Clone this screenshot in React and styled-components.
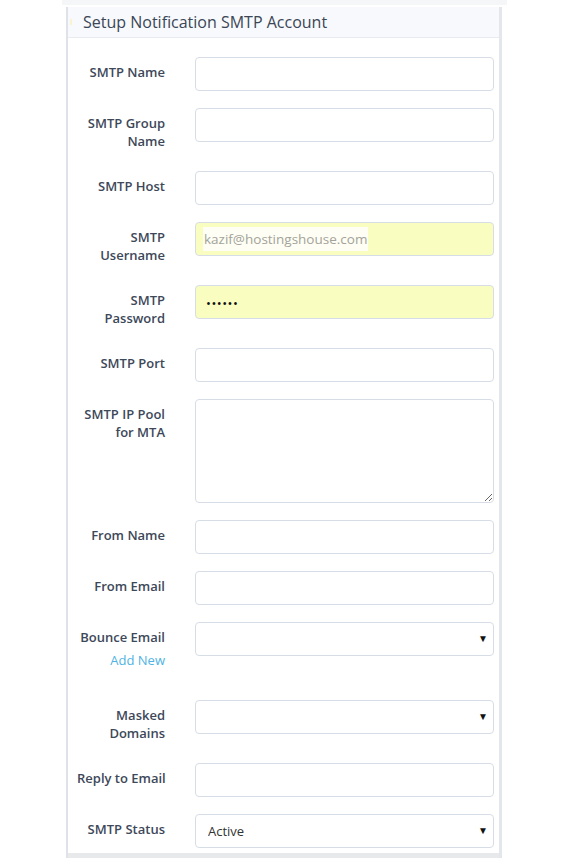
import React from 'react'
import styled, { createGlobalStyle } from 'styled-components'

const GlobalStyle = createGlobalStyle`
  body {
    margin: 0;
    background: #fff;
    font-family: 'Open Sans', 'Noto Sans', sans-serif;
  }
`

const Page = styled.div`
  width: 583px;
  height: 858px;
  overflow: hidden;
`

const TopStrip = styled.div`
  height: 5px;
  margin: 0 76px 2px 62px;
  background: #f5f6f8;
`

const Panel = styled.div`
  margin: 0 81px 0 66px;
  border-left: 2px solid #dfe3e9;
  border-right: 3px solid #e3e6eb;
`

const Header = styled.div`
  position: relative;
  height: 30px;
  line-height: 30px;
  padding-left: 15px;
  background: #f7f9fc;
  border-bottom: 1px solid #e8ecf1;
  font-size: 16px;
  color: #3b4656;
`

const Marker = styled.span`
  position: absolute;
  left: 2px;
  top: 12px;
  width: 2px;
  height: 6px;
  background: #faf3d2;
`

const Body = styled.div`
  padding: 19px 5px 5px 9px;
`

const Row = styled.div`
  display: grid;
  grid-template-columns: 88px 299px;
  column-gap: 30px;
  align-items: start;
  margin-bottom: ${p => (p.last ? '0' : '17px')};
`

const LabelBox = styled.div`
  padding: 6px 0 ${p => (p.extra ? '14px' : '4px')};
  text-align: right;
`

const Label = styled.div`
  font-size: 13px;
  font-weight: 600;
  line-height: 18px;
  white-space: nowrap;
  color: #3d4859;
`

const AddNew = styled.a`
  display: block;
  margin-top: 5px;
  font-size: 13px;
  line-height: 18px;
  color: #4fb3e3;
  text-decoration: none;
`

const Input = styled.input`
  box-sizing: border-box;
  width: 100%;
  height: 34px;
  margin: 0;
  padding: 0 10px;
  border: 1px solid #d7dde6;
  border-radius: 4px;
  background: #fff;
  font-family: inherit;
  font-size: 13px;
  color: #111;
  outline: none;
`

const Filled = styled.div`
  box-sizing: border-box;
  display: flex;
  align-items: center;
  height: 34px;
  padding: 0 7px;
  border: 1px solid #d7dde6;
  border-radius: 4px;
  background: #fafdc0;
`

const Masked = styled.span`
  padding: 3px 1px;
  background: #fefef4;
  font-size: 13.5px;
  color: #a3a39a;
`

const Dots = styled.span`
  font-size: 13px;
  color: #111;
  letter-spacing: 0.5px;
  padding: 2px 0 0 3px;
`

const TextArea = styled.textarea`
  box-sizing: border-box;
  display: block;
  width: 100%;
  height: 104px;
  margin: 0;
  border: 1px solid #d7dde6;
  border-radius: 4px;
  background: #fff;
  outline: none;
`

const SelectWrap = styled.div`
  position: relative;
`

const Select = styled.select`
  box-sizing: border-box;
  width: 100%;
  height: 34px;
  margin: 0;
  padding: 0 12px;
  border: 1px solid #d7dde6;
  border-radius: 4px;
  background: #fff;
  appearance: none;
  font-family: inherit;
  font-size: 13px;
  color: #333;
  outline: none;
`

const Arrow = styled.span`
  position: absolute;
  right: 6px;
  top: 11px;
  font-size: 10px;
  line-height: 10px;
  color: #111;
  pointer-events: none;
`

const Footer = styled.div`
  height: 6px;
  background: #e8e9eb;
`

const Field = ({ kind, value }) => {
  if (kind === 'textarea') return <TextArea />
  if (kind === 'select')
    return (
      <SelectWrap>
        <Select defaultValue={value || ''}>
          <option value={value || ''}>{value || ''}</option>
        </Select>
        <Arrow>▼</Arrow>
      </SelectWrap>
    )
  if (kind === 'user')
    return (
      <Filled>
        <Masked>kazif@hostingshouse.com</Masked>
      </Filled>
    )
  if (kind === 'pass')
    return (
      <Filled>
        <Dots>••••••</Dots>
      </Filled>
    )
  return <Input type="text" />
}

const rows = [
  { label: ['SMTP Name'] },
  { label: ['SMTP Group', 'Name'] },
  { label: ['SMTP Host'] },
  { label: ['SMTP', 'Username'], kind: 'user' },
  { label: ['SMTP', 'Password'], kind: 'pass' },
  { label: ['SMTP Port'] },
  { label: ['SMTP IP Pool', 'for MTA'], kind: 'textarea' },
  { label: ['From Name'] },
  { label: ['From Email'] },
  { label: ['Bounce Email'], kind: 'select', addNew: true },
  { label: ['Masked', 'Domains'], kind: 'select' },
  { label: ['Reply to Email'] },
  { label: ['SMTP Status'], kind: 'select', value: 'Active' },
]

export default function App() {
  return (
    <Page>
      <GlobalStyle />
      <TopStrip />
      <Panel>
        <Header>
          <Marker />
          Setup Notification SMTP Account
        </Header>
        <Body>
          {rows.map((r, i) => (
            <Row key={i} last={i === rows.length - 1}>
              <LabelBox extra={r.addNew}>
                {r.label.map(l => (
                  <Label key={l}>{l}</Label>
                ))}
                {r.addNew && <AddNew href="#">Add New</AddNew>}
              </LabelBox>
              <Field kind={r.kind} value={r.value} />
            </Row>
          ))}
        </Body>
        <Footer />
      </Panel>
    </Page>
  )
}
